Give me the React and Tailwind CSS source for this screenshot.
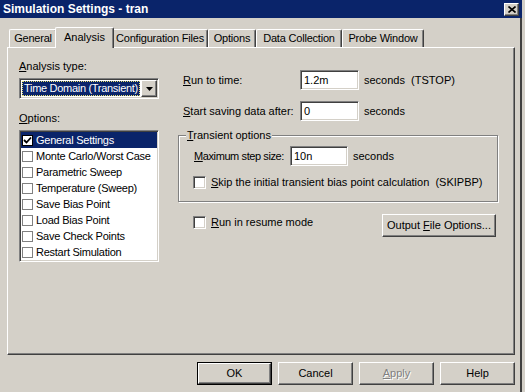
import React from 'react';

const raised =
  'border border-t-white border-l-white border-r-[#404040] border-b-[#404040] shadow-[inset_-1px_-1px_0_#808080] bg-[#d4d0c8]';
const sunken =
  'border border-t-[#808080] border-l-[#808080] border-r-white border-b-white shadow-[inset_1px_1px_0_#404040,inset_-1px_-1px_0_#d4d0c8]';

const tabs = [
  { label: 'General', w: 'w-[48px]' },
  { label: 'Analysis', w: 'w-[59px]', active: true },
  { label: 'Configuration Files', w: 'w-[96px]' },
  { label: 'Options', w: 'w-[48px]' },
  { label: 'Data Collection', w: 'w-[86px]' },
  { label: 'Probe Window', w: 'w-[82px]' },
];

const listItems = [
  'General Settings',
  'Monte Carlo/Worst Case',
  'Parametric Sweep',
  'Temperature (Sweep)',
  'Save Bias Point',
  'Load Bias Point',
  'Save Check Points',
  'Restart Simulation',
];

function Check() {
  return (
    <svg width="9" height="9" viewBox="0 0 9 9">
      <path d="M1 4 L3.5 6.5 L8 1.5" fill="none" stroke="#000" strokeWidth="1.8" />
    </svg>
  );
}

function CheckBox() {
  return <div className={`w-[13px] h-[13px] shrink-0 bg-white ${sunken}`} />;
}

function TextBox({ value, w }) {
  return (
    <div className={`${w} h-[20px] shrink-0 bg-white pl-[3px] flex items-center ${sunken}`}>
      {value}
    </div>
  );
}

function Button({ children, w = 'w-[75px]', def, disabled }) {
  const inner = (
    <div
      className={`w-full h-full flex items-center justify-center ${raised} ${
        disabled ? 'text-[#808080] [text-shadow:1px_1px_0_#fff]' : ''
      }`}
    >
      {children}
    </div>
  );
  if (def) {
    return <div className={`${w} h-[23px] border border-black`}>{inner}</div>;
  }
  return <div className={`${w} h-[23px]`}>{inner}</div>;
}

export default function App() {
  return (
    <div className="w-[525px] h-[392px] bg-[#d4d0c8] flex flex-col overflow-hidden text-black text-[11px] leading-[13px] font-['Liberation_Sans',Arial,sans-serif]">
      {/* Title bar */}
      <div className="w-[522px] h-[18px] shrink-0 bg-[#0a246a] flex items-start justify-between">
        <span className="pl-[3px] text-white font-bold text-[12px] leading-[18px]">
          Simulation Settings - tran
        </span>
        <div className={`mt-[3px] mr-[3px] w-[15px] h-[13px] flex items-center justify-center ${raised}`}>
          <svg width="8" height="7" viewBox="0 0 8 7">
            <path d="M0.5 0.5 L7.5 6.5 M7.5 0.5 L0.5 6.5" stroke="#000" strokeWidth="1.6" />
          </svg>
        </div>
      </div>

      <div className="w-[522px] flex-1 border-r-2 border-r-[#404040]">
        {/* Tabs */}
        <div className="h-[29px] flex items-end pl-[9px]">
          {tabs.map((t) =>
            t.active ? (
              <div
                key={t.label}
                className={`${t.w} -mx-[2px] -mb-px h-[21px] relative z-10 bg-[#d4d0c8] border-t border-l border-r border-t-white border-l-white border-r-[#404040] shadow-[inset_-1px_0_0_#808080] rounded-t-[2px] flex items-center justify-center pb-[2px]`}
              >
                {t.label}
              </div>
            ) : (
              <div
                key={t.label}
                className={`${t.w} h-[18px] whitespace-nowrap tracking-[-0.2px] border-t border-l border-r border-t-white border-l-white border-r-[#404040] shadow-[inset_-1px_0_0_#808080] rounded-t-[2px] flex items-center justify-center`}
              >
                {t.label}
              </div>
            )
          )}
        </div>

        {/* Panel */}
        <div className={`ml-[7px] w-[508px] h-[308px] flex ${raised}`}>
          {/* Left column */}
          <div className="ml-[11px] w-[140px] pt-[12px] flex flex-col">
            <div>
              <u>A</u>nalysis type:
            </div>
            <div className={`mt-[5px] h-[21px] bg-white flex items-center pl-[1px] pr-[1px] ${sunken}`}>
              <div className="ml-[1px] h-[15px] w-[118px] bg-[#0a246a] text-white outline-1 outline-dotted outline-[#e8e070] -outline-offset-1 flex items-center pl-[2px] whitespace-nowrap overflow-hidden tracking-[-0.3px]">
                Time Domain (Transient)
              </div>
              <div className={`ml-auto w-[16px] h-[17px] flex items-center justify-center ${raised}`}>
                <svg width="7" height="4" viewBox="0 0 7 4">
                  <path d="M0 0 H7 L3.5 4 Z" fill="#000" />
                </svg>
              </div>
            </div>
            <div className="mt-[13px]">
              <u>O</u>ptions:
            </div>
            <div className={`mt-[5px] h-[132px] bg-white py-[1px] px-[1px] overflow-hidden ${sunken}`}>
              {listItems.map((item, i) => (
                <div
                  key={item}
                  className={`h-[16px] flex items-center pl-[1px] whitespace-nowrap tracking-[-0.25px] ${
                    i === 0 ? 'bg-[#0a246a] text-white' : ''
                  }`}
                >
                  <div
                    className={`w-[11px] h-[11px] shrink-0 bg-white border flex items-center justify-center ${
                      i === 0 ? 'border-black' : 'border-[#808080]'
                    }`}
                  >
                    {i === 0 && <Check />}
                  </div>
                  <span className="ml-[3px]">{item}</span>
                </div>
              ))}
            </div>
          </div>

          {/* Right column */}
          <div className="ml-[19px] w-[321px] pt-[22px] flex flex-col">
            <div className="h-[20px] flex items-center">
              <span className="pl-[5px] w-[122px] shrink-0">
                <u>R</u>un to time:
              </span>
              <TextBox value="1.2m" w="w-[59px]" />
              <span className="ml-[5px] whitespace-pre">seconds  (TSTOP)</span>
            </div>
            <div className="mt-[11px] h-[20px] flex items-center">
              <span className="pl-[5px] w-[122px] shrink-0 whitespace-nowrap">
                <u>S</u>tart saving data after:
              </span>
              <TextBox value="0" w="w-[59px]" />
              <span className="ml-[5px]">seconds</span>
            </div>

            <fieldset className="mt-[8px] w-[320px] border border-[#808080] shadow-[inset_1px_1px_0_#fff,1px_1px_0_#fff]">
              <legend className="ml-[7px] px-[1px] leading-[13px] bg-[#d4d0c8]">
                <u>T</u>ransient options
              </legend>
              <div className="pl-[15px] pb-[12px]">
                <div className="mt-[4px] h-[20px] flex items-center">
                  <span className="w-[96px] shrink-0 whitespace-nowrap tracking-[-0.4px]">
                    <u>M</u>aximum step size:
                  </span>
                  <TextBox value="10n" w="w-[58px]" />
                  <span className="ml-[5px]">seconds</span>
                </div>
                <div className="mt-[10px] h-[13px] flex items-center -ml-px">
                  <CheckBox />
                  <span className="ml-[5px] whitespace-pre">
                    <u>S</u>kip the initial transient bias point calculation  (SKIPBP)
                  </span>
                </div>
              </div>
            </fieldset>

            <div className="mt-[12px] flex items-start">
              <div className="mt-[2px] ml-[15px] h-[13px] flex items-center">
                <CheckBox />
                <span className="ml-[5px]">
                  <u>R</u>un in resume mode
                </span>
              </div>
              <div className="ml-auto mr-[3px]">
                <Button w="w-[114px]">
                  <span>
                    Output <u>F</u>ile Options...
                  </span>
                </Button>
              </div>
            </div>
          </div>
        </div>

        {/* Dialog buttons */}
        <div className="ml-[7px] w-[508px] mt-[7px] flex justify-end gap-[6px]">
          <Button def>OK</Button>
          <Button>Cancel</Button>
          <Button disabled>
            <span>
              <u>A</u>pply
            </span>
          </Button>
          <Button>Help</Button>
        </div>
      </div>
    </div>
  );
}
